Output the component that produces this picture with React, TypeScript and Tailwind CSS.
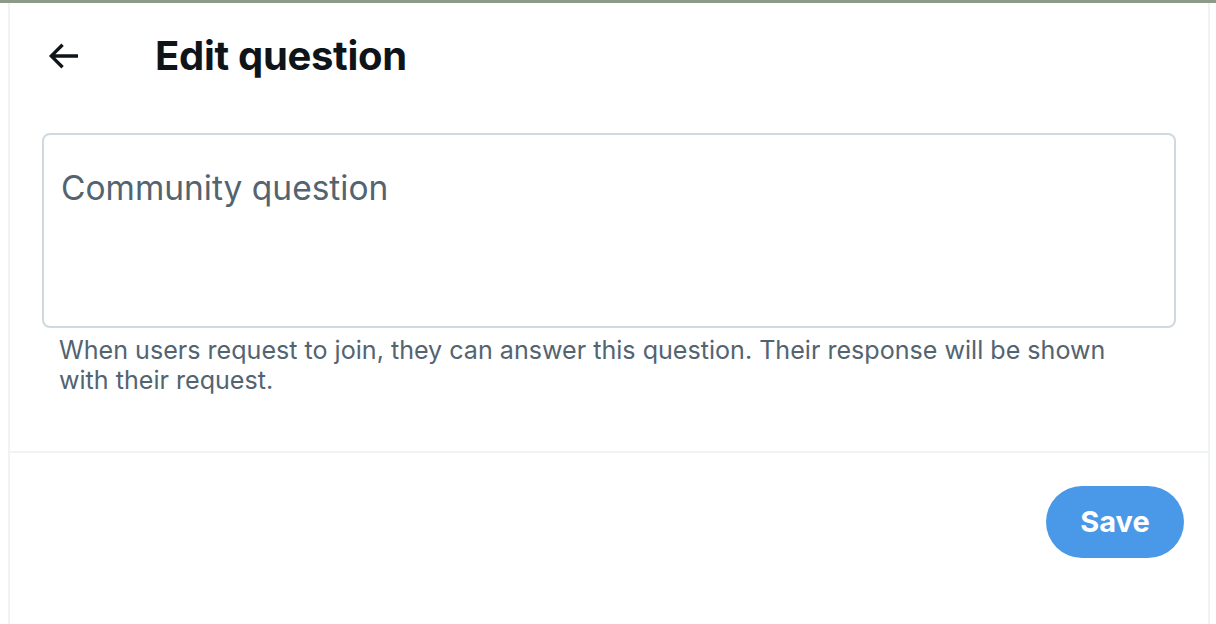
import React from "react";

export default function App() {
  return (
    <div className="w-[1216px] h-[624px] bg-white overflow-hidden flex flex-col" style={{ fontFamily: 'Inter, "Noto Sans", sans-serif' }}>
      <div className="h-[3px] bg-[#8b9a89] shrink-0" />
      <div className="ml-[8px] w-[1202px] flex-1 border-x-2 border-[#eff3f4] flex flex-col">
        <div className="h-[106px] flex items-center">
          <div className="w-[106px] flex items-center justify-center">
            <svg viewBox="0 0 24 24" className="w-[40px] h-[40px] fill-[#0f1419]">
              <path d="M7.414 13l5.043 5.04-1.414 1.42L3.586 12l7.457-7.46 1.414 1.42L7.414 11H21v2H7.414z" />
            </svg>
          </div>
          <div className="ml-[39px] text-[40px] font-bold text-[#0f1419] tracking-[-0.3px] leading-none">Edit question</div>
        </div>
        <div className="px-[32px] pt-[24px]">
          <div className="h-[195px] border-2 border-[#cfd9de] rounded-[8px] px-[17px] pt-[37px]">
            <div className="text-[33.5px] text-[#536471] leading-none">Community question</div>
          </div>
          <div className="pl-[17px] pr-[60px] pt-[7px] text-[25.1px] leading-[30px] text-[#536471]">
            When users request to join, they can answer this question. Their response will be shown with their request.
          </div>
        </div>
        <div className="mt-[56px] h-[2px] bg-[#eff3f4]" />
        <div className="flex justify-end pr-[24px] pt-[33px]">
          <button className="w-[138px] h-[72px] rounded-full bg-[#4a99e8] text-white text-[29px] font-bold">Save</button>
        </div>
      </div>
    </div>
  );
}
